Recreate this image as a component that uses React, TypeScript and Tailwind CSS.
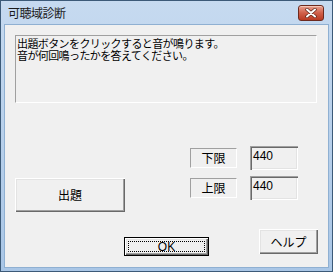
const jp = { fontFamily: '"Noto Sans CJK JP", "Liberation Sans", sans-serif' };
const mono = { fontFamily: '"Liberation Sans", "Noto Sans CJK JP", sans-serif' };

const raised =
  "shadow-[inset_1px_1px_0_#ffffff,inset_-1px_-1px_0_#696969,inset_-2px_-2px_0_#a0a0a0,inset_2px_2px_0_#e3e3e3]";

function StaticEdge({ children }: { children: React.ReactNode }) {
  return (
    <div
      className="flex h-[20px] w-[47px] items-center justify-center border border-t-[#a0a0a0] border-l-[#a0a0a0] border-b-white border-r-white text-[12px] leading-none text-black"
      style={jp}
    >
      {children}
    </div>
  );
}

function Edit({ value }: { value: string }) {
  return (
    <div
      className="h-[24px] w-[48px] bg-[#f0f0f0] px-[3px] pt-[3px] text-[12px] leading-[14px] text-black shadow-[inset_1px_1px_0_#a0a0a0,inset_2px_2px_0_#696969,inset_-1px_-1px_0_#ffffff,inset_-2px_-2px_0_#e3e3e3]"
      style={mono}
    >
      {value}
    </div>
  );
}

function CloseButton() {
  return (
    <div className="flex h-[16px] w-[26px] items-center justify-center rounded-[3px] border border-[#6d2a1e] bg-gradient-to-b from-[#e8a090] via-[#d0604a] to-[#b83a22] shadow-[inset_0_1px_0_#f4c6b8]">
      <svg width="12" height="10" viewBox="0 0 12 10">
        <path d="M2 1.5 L10 8.5 M10 1.5 L2 8.5" stroke="#5a2418" strokeWidth="3.4" strokeLinecap="round" />
        <path d="M2 1.5 L10 8.5 M10 1.5 L2 8.5" stroke="#ffffff" strokeWidth="2" strokeLinecap="round" />
      </svg>
    </div>
  );
}

export default function App() {
  return (
    <div className="flex h-[272px] w-[333px] flex-col border border-[#3c5a78] bg-gradient-to-b from-[#c6daf0] to-[#a9c6e6]">
      {/* title bar */}
      <div className="flex h-[23px] shrink-0 items-center justify-between pl-[7px] pr-[8px] pt-[1px]">
        <span className="text-[12px] tracking-[-0.5px] text-[#1a1a1a]" style={jp}>
          可聴域診断
        </span>
        <CloseButton />
      </div>

      {/* client area */}
      <div className="mx-[3px] mb-[3px] flex-1 border border-[#8fb0d2] bg-[#f0f0f0] pl-[10px] pt-[10px]">
        <div
          className="h-[68px] w-[302px] border border-t-[#a0a0a0] border-l-[#a0a0a0] border-b-white border-r-white pl-[1px] pt-[1px] text-[11px] leading-[12px] tracking-[-0.6px] text-black"
          style={jp}
        >
          <div>出題ボタンをクリックすると音が鳴ります。</div>
          <div>音が何回鳴ったかを答えてください。</div>
        </div>

        <div className="mt-[43px] flex">
          <div
            className={`mt-[32px] flex h-[34px] w-[110px] items-center justify-center bg-[#f0f0f0] text-[12px] text-black ${raised}`}
            style={jp}
          >
            出題
          </div>
          <div className="ml-[65px] flex flex-col gap-[6px]">
            <div className="flex items-center gap-[13px]">
              <StaticEdge>下限</StaticEdge>
              <Edit value="440" />
            </div>
            <div className="flex items-center gap-[13px]">
              <StaticEdge>上限</StaticEdge>
              <Edit value="440" />
            </div>
          </div>
        </div>

        <div className="mt-[17px] flex items-start">
          <div className="ml-[109px] mt-[8px] h-[19px] w-[85px] border border-black">
            <div className={`flex h-full w-full items-center justify-center p-[3px] ${raised}`}>
              <div
                className="flex h-full w-full items-center justify-center border border-dotted border-black text-[12px] leading-none text-black"
                style={mono}
              >
                OK
              </div>
            </div>
          </div>
          <div
            className={`ml-[50px] flex h-[25px] w-[59px] items-center justify-center bg-[#f0f0f0] text-[12px] text-black ${raised}`}
            style={jp}
          >
            ヘルプ
          </div>
        </div>
      </div>
    </div>
  );
}
